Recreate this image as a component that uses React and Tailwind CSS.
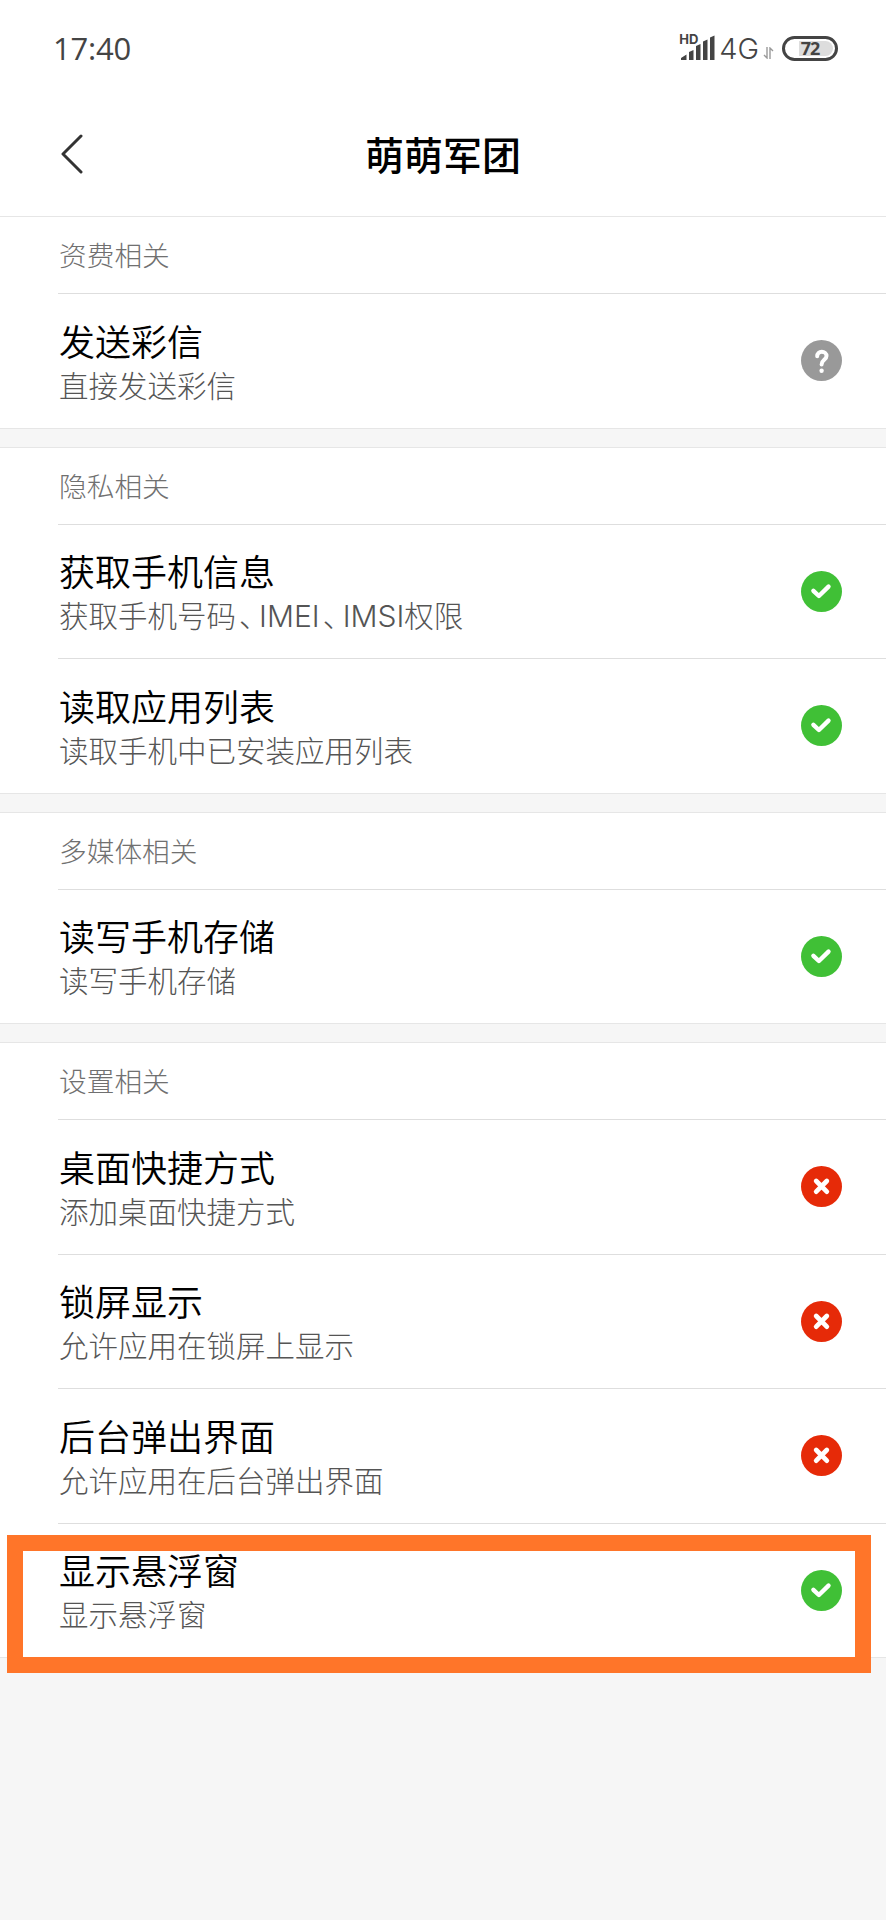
import React from "react";

const SECTIONS = [
  {
    label: "资费相关",
    items: [{ title: "发送彩信", desc: "直接发送彩信", status: "ask" }],
  },
  {
    label: "隐私相关",
    items: [
      { title: "获取手机信息", desc: "获取手机号码、IMEI、IMSI权限", status: "allow" },
      { title: "读取应用列表", desc: "读取手机中已安装应用列表", status: "allow" },
    ],
  },
  {
    label: "多媒体相关",
    items: [{ title: "读写手机存储", desc: "读写手机存储", status: "allow" }],
  },
  {
    label: "设置相关",
    items: [
      { title: "桌面快捷方式", desc: "添加桌面快捷方式", status: "deny" },
      { title: "锁屏显示", desc: "允许应用在锁屏上显示", status: "deny" },
      { title: "后台弹出界面", desc: "允许应用在后台弹出界面", status: "deny" },
      { title: "显示悬浮窗", desc: "显示悬浮窗", status: "allow", highlight: true },
    ],
  },
];

const STATUS_COLOR = { ask: "#999999", allow: "#40c036", deny: "#e62a08" };

function StatusIcon({ status }) {
  return (
    <svg className="size-[41px] shrink-0" viewBox="0 0 41 41" fill="none" stroke="#fff" strokeLinecap="round" strokeLinejoin="round">
      <circle cx="20.5" cy="20.5" r="20.5" fill={STATUS_COLOR[status]} stroke="none" />
      {status === "allow" && <path d="M12.4 19.8l5.5 5.2 9.6-9.4" strokeWidth="4.4" />}
      {status === "deny" && <path d="M15.2 15l10.6 10.6M25.8 15l-10.6 10.6" strokeWidth="4.8" />}
      {status === "ask" && (
        <>
          <path d="M16.2 16.3c0-2.900 2-4.500 4.600-4.500s4.700 1.700 4.700 4.200c0 3.800-4.900 3.900-4.900 8.400" strokeWidth="4" />
          <circle cx="20.6" cy="30.8" r="2.2" fill="#fff" stroke="none" />
        </>
      )}
    </svg>
  );
}

// La coma china va más estrecha y el texto latino usa Inter
function Descripcion({ text }) {
  return text.split(/(、|[A-Z]+)/).map((part, i) => {
    if (part === "、") return <span key={i} className="ml-[3px] tracking-[-9.5px]">{part}</span>;
    if (/^[A-Z]+$/.test(part)) return <span key={i} className="font-['Inter'] text-[30px] leading-none">{part}</span>;
    return part;
  });
}

function StatusBar() {
  return (
    <div className="flex h-[98px] items-center justify-between pb-0.5 pl-[53px] pr-12 text-[#444]">
      <span className="font-['Open_Sans'] text-[31px] font-normal leading-none tracking-[-0.2px]">17:40</span>
      <div className="flex items-center">
        <div className="relative mr-1 h-[26px] w-[35px]">
          <span className="absolute -left-px -top-px font-['Inter'] text-[13px] font-bold leading-[10px]">HD</span>
          <svg className="h-[26px] w-[35px]" viewBox="0 0 35 26" fill="#444">
            <path d="M1 25v-2l5.500-3.500v5.500zM9 17l4.500-2v10H9zM16 11l4.500-2v16H16zM23 6.500l4.500-2v20.500H23zM30 2.500l4.500-2v24.500H30z" />
          </svg>
        </div>
        <span className="font-['Inter'] text-[29px] font-light leading-none">4G</span>
        <svg className="ml-1 mt-2.5 h-3 w-[11px]" viewBox="0 0 11 12" fill="none" stroke="#999" strokeWidth="1.4">
          <path d="M4 0v11L1 8M7 12V1l3 3" />
        </svg>
        <div className="relative ml-2 flex h-[25px] w-14 items-center justify-center overflow-hidden rounded-full border-[3px] border-[#444]">
          <div className="absolute left-3.5 top-0.5 h-[15px] w-[34px] rounded-r-full bg-[#ddd]" />
          <span className="relative font-['Noto_Sans'] text-[18px] font-bold leading-none tracking-[-1px]">72</span>
        </div>
      </div>
    </div>
  );
}

function TitleBar() {
  return (
    <header className="grid h-[118px] grid-cols-[100px_1fr_100px] items-center pb-[7px]">
      <svg className="ml-[61px] h-10 w-[22px]" viewBox="0 0 22 40" fill="none" stroke="#333" strokeWidth="3" strokeLinecap="round" strokeLinejoin="round">
        <path d="M20 2L2 20l18 18" />
      </svg>
      <h1 className="text-center text-[39px] font-medium leading-none text-black">萌萌军团</h1>
    </header>
  );
}

function Row({ item, last }) {
  return (
    <div className={"relative pl-[58px] " + (last ? "h-[133.5px]" : "h-[134.5px]")}>
      <div className={"flex h-full items-center justify-between pr-11 " + (last ? "" : "border-b border-[#dedede]")}>
        <div className="pl-px pt-0.5">
          <p className="text-[36px] font-[350] leading-[44px] text-black">{item.title}</p>
          <p className="text-[29.5px] leading-[44px] text-[#555]"><Descripcion text={item.desc} /></p>
        </div>
        <StatusIcon status={item.status} />
      </div>
      {item.highlight && (
        <div className="absolute left-[7px] top-[11px] h-[138px] w-[864px] border-[16px] border-[#ff7529]" />
      )}
    </div>
  );
}

export default function App() {
  return (
    <div className="min-h-[1920px] w-[886px] bg-[#f6f6f6] font-['Noto_Sans_CJK_SC',sans-serif] font-light">
      <div className="bg-white">
        <StatusBar />
        <TitleBar />
      </div>
      <main className="flex flex-col gap-[18px]">
        {SECTIONS.map((section) => (
          <section key={section.label} className="border-y border-[#e6e6e6] bg-white">
            <div className="pl-[58px]">
              <h2 className="flex h-[77px] items-center border-b border-[#dedede] pl-px text-[27.7px] leading-none text-[#707070]">
                {section.label}
              </h2>
            </div>
            {section.items.map((item, i) => (
              <Row key={item.title} item={item} last={i === section.items.length - 1} />
            ))}
          </section>
        ))}
      </main>
    </div>
  );
}
